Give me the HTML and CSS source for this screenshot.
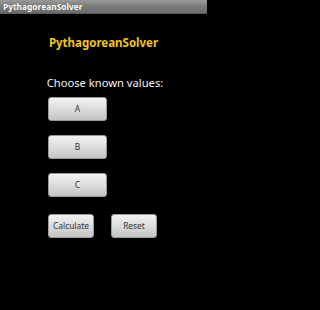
FILE: index.html
```html
<!DOCTYPE html>
<html>
<head>
<meta charset="utf-8">
<link rel="stylesheet" href="styles.css">
</head>
<body>
<div class="titlebar">PythagoreanSolver</div>
<main class="content">
  <h1 class="app-title">PythagoreanSolver</h1>
  <p class="prompt">Choose known values:</p>
  <div class="buttons">
    <button class="btn btn-wide">A</button>
    <button class="btn btn-wide">B</button>
    <button class="btn btn-wide">C</button>
    <div class="row">
      <button class="btn btn-small">Calculate</button>
      <button class="btn btn-small">Reset</button>
    </div>
  </div>
</main>
</body>
</html>
```
FILE: styles.css
```css
html, body {
  margin: 0;
  padding: 0;
  background: #000;
  width: 207px;
  height: 310px;
  overflow: hidden;
  font-family: "Noto Sans", "Open Sans", "DejaVu Sans", sans-serif;
}
.titlebar {
  height: 14px;
  line-height: 14px;
  padding-left: 3px;
  font-size: 8.4px;
  font-weight: bold;
  color: #fff;
  background: linear-gradient(#9a9a9a, #7a7a7a 50%, #6c6c6c);
  border-bottom: 1px solid #5a5a5a;
  box-sizing: border-box;
  text-shadow: 0 0 1px rgba(0,0,0,0.4);
}
.content {
  display: flex;
  flex-direction: column;
  padding-top: 21.5px;
}
.app-title {
  margin: 0;
  text-align: center;
  font-size: 11.5px;
  line-height: 14px;
  font-weight: bold;
  color: #f0c41c;
}
.prompt {
  margin: 26px 0 0 0;
  text-align: center;
  font-size: 11.2px;
  line-height: 14px;
  color: #f2f2f2;
  padding-left: 3px;
}
.buttons {
  display: flex;
  flex-direction: column;
  align-items: flex-start;
  gap: 14px;
  padding-left: 48px;
  margin-top: 7.4px;
}
.row {
  display: flex;
  gap: 17px;
  margin-top: 3px;
}
.btn {
  height: 24px;
  margin: 0;
  padding: 0;
  border: 1px solid #9c9c9c;
  border-radius: 3px;
  background: linear-gradient(#f2f2f2, #dcdcdc 50%, #c4c4c4);
  color: #333;
  font-family: "Noto Sans", "Open Sans", "DejaVu Sans", sans-serif;
  font-size: 8.4px;
  line-height: 22px;
  text-align: center;
}
.btn-wide {
  width: 59px;
}
.btn-small {
  width: 46px;
}
```
